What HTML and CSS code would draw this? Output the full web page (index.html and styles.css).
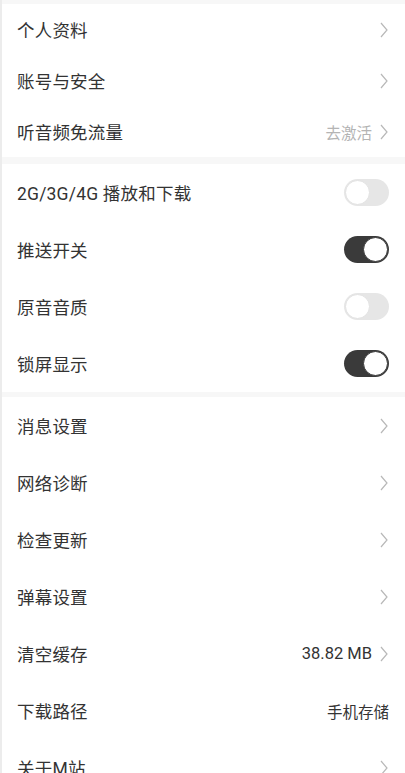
FILE: index.html
```html
<!DOCTYPE html>
<html lang="zh">
<head>
<meta charset="utf-8">
<link rel="stylesheet" href="styles.css">
</head>
<body>
<div class="page">
  <div class="group">
    <div class="row"><span class="label">个人资料</span><span class="right"><svg class="chev" viewBox="0 0 8 16"><polyline points="1,1 7,8 1,15"/></svg></span></div>
    <div class="row"><span class="label">账号与安全</span><span class="right"><svg class="chev" viewBox="0 0 8 16"><polyline points="1,1 7,8 1,15"/></svg></span></div>
    <div class="row"><span class="label">听音频免流量</span><span class="right"><span class="value muted">去激活</span><svg class="chev" viewBox="0 0 8 16"><polyline points="1,1 7,8 1,15"/></svg></span></div>
  </div>
  <div class="group tall">
    <div class="row"><span class="label">2G/3G/4G 播放和下载</span><span class="toggle"></span></div>
    <div class="row"><span class="label">推送开关</span><span class="toggle on"></span></div>
    <div class="row"><span class="label">原音音质</span><span class="toggle"></span></div>
    <div class="row"><span class="label">锁屏显示</span><span class="toggle on"></span></div>
  </div>
  <div class="group tall last">
    <div class="row"><span class="label">消息设置</span><span class="right"><svg class="chev" viewBox="0 0 8 16"><polyline points="1,1 7,8 1,15"/></svg></span></div>
    <div class="row"><span class="label">网络诊断</span><span class="right"><svg class="chev" viewBox="0 0 8 16"><polyline points="1,1 7,8 1,15"/></svg></span></div>
    <div class="row"><span class="label">检查更新</span><span class="right"><svg class="chev" viewBox="0 0 8 16"><polyline points="1,1 7,8 1,15"/></svg></span></div>
    <div class="row"><span class="label">弹幕设置</span><span class="right"><svg class="chev" viewBox="0 0 8 16"><polyline points="1,1 7,8 1,15"/></svg></span></div>
    <div class="row"><span class="label">清空缓存</span><span class="right"><span class="value num">38.82 MB</span><svg class="chev" viewBox="0 0 8 16"><polyline points="1,1 7,8 1,15"/></svg></span></div>
    <div class="row"><span class="label">下载路径</span><span class="right"><span class="value">手机存储</span></span></div>
    <div class="row"><span class="label">关于M站</span><span class="right"><svg class="chev" viewBox="0 0 8 16"><polyline points="1,1 7,8 1,15"/></svg></span></div>
  </div>
</div>
</body>
</html>
```
FILE: styles.css
```css
html, body {
  margin: 0;
  padding: 0;
  background: #f7f7f7;
  overflow: hidden;
}
body {
  font-family: Roboto, "Noto Sans CJK SC", "Noto Sans", sans-serif;
  color: #333;
}
.page {
  height: 773px;
  overflow: hidden;
  padding-top: 4px;
  border-left: 2px solid #ececec;
  box-sizing: border-box;
  display: flex;
  flex-direction: column;
  gap: 7px;
}
.group {
  background: #fff;
  display: flex;
  flex-direction: column;
  flex-shrink: 0;
}
.group.last {
  margin-top: -2px;
}
.row {
  height: 51px;
  display: flex;
  align-items: center;
  justify-content: space-between;
  padding: 0 16px 0 15px;
}
.group.tall .row {
  height: 57px;
}
.label {
  font-size: 17.5px;
  color: #333;
  letter-spacing: 0.2px;
}
.right {
  display: flex;
  align-items: center;
  gap: 8px;
}
.value {
  font-size: 15.5px;
  color: #333;
}
.value.num {
  font-size: 16.5px;
}
.value.muted {
  color: #b4b4b4;
}
.chev {
  width: 8px;
  height: 16px;
  fill: none;
  stroke: #b8b8b8;
  stroke-width: 1.2;
  margin-right: 1px;
}
.toggle {
  width: 45px;
  height: 27px;
  border-radius: 14px;
  background: #e6e6e6;
  box-sizing: border-box;
  position: relative;
}
.toggle::after {
  content: "";
  position: absolute;
  top: 1px;
  left: 1px;
  width: 25px;
  height: 25px;
  border-radius: 50%;
  background: #fff;
  box-sizing: border-box;
  border: 1px solid #e2e2e2;
}
.toggle.on {
  background: #3a3a3a;
}
.toggle.on::after {
  left: 19px;
  border: 1.5px solid #3a3a3a;
}
```
